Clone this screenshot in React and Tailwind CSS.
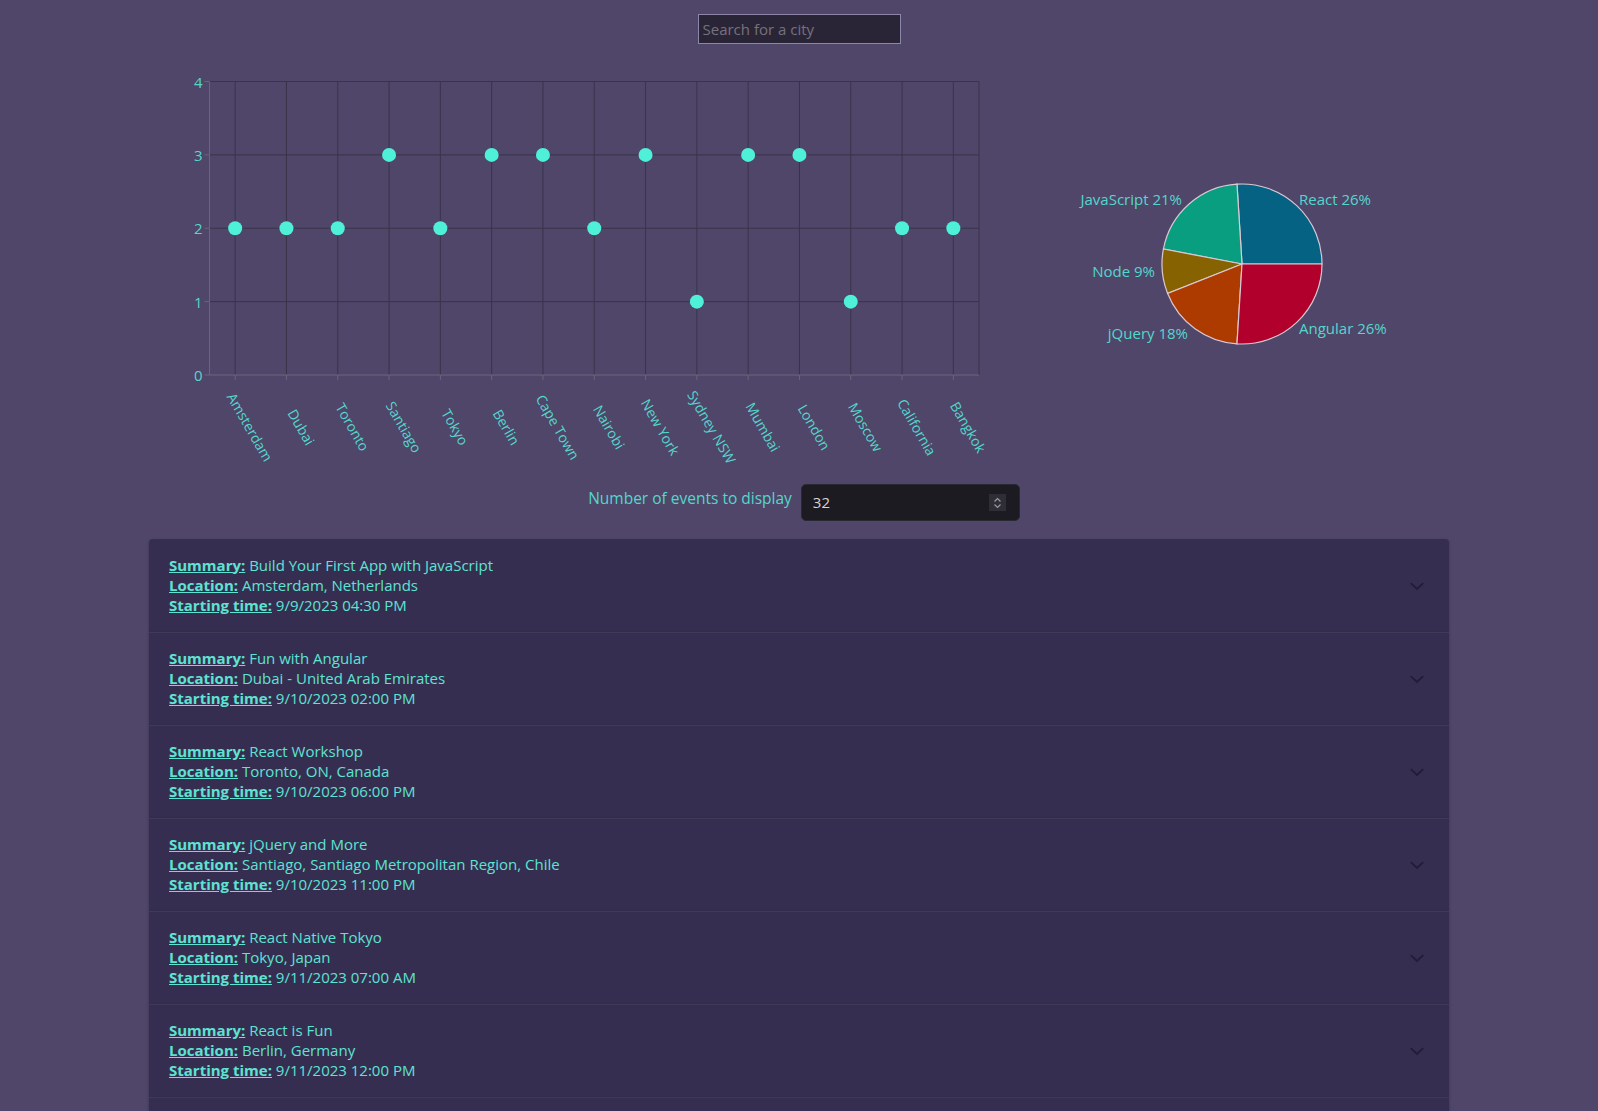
import React, { useState } from 'react';

const cities = ['Amsterdam', 'Dubai', 'Toronto', 'Santiago', 'Tokyo', 'Berlin', 'Cape Town', 'Nairobi', 'New York', 'Sydney NSW', 'Mumbai', 'London', 'Moscow', 'California', 'Bangkok'];
const counts = [2, 2, 2, 3, 2, 3, 3, 2, 3, 1, 3, 3, 1, 2, 2];

const genres = [
  { name: 'React', value: 26, color: '#066282' },
  { name: 'JavaScript', value: 21, color: '#0a9e80' },
  { name: 'Node', value: 9, color: '#876200' },
  { name: 'jQuery', value: 18, color: '#ad3b00' },
  { name: 'Angular', value: 26, color: '#b0002b' },
];

const events = [
  { summary: 'Build Your First App with JavaScript', location: 'Amsterdam, Netherlands', start: '9/9/2023 04:30 PM' },
  { summary: 'Fun with Angular', location: 'Dubai - United Arab Emirates', start: '9/10/2023 02:00 PM' },
  { summary: 'React Workshop', location: 'Toronto, ON, Canada', start: '9/10/2023 06:00 PM' },
  { summary: 'jQuery and More', location: 'Santiago, Santiago Metropolitan Region, Chile', start: '9/10/2023 11:00 PM' },
  { summary: 'React Native Tokyo', location: 'Tokyo, Japan', start: '9/11/2023 07:00 AM' },
  { summary: 'React is Fun', location: 'Berlin, Germany', start: '9/11/2023 12:00 PM' },
  { summary: 'Learn Node', location: 'Cape Town, South Africa', start: '9/11/2023 05:00 PM' },
];

// plot area inside the scatter svg
const X0 = 60.5, X1 = 830, YT = 21.5, YB = 315;
const band = (X1 - X0) / cities.length;
const yOf = (v) => YB - (v / 4) * (YB - YT);

function CityScatter() {
  return (
    <svg width="850" height="410" className="shrink-0" style={{ fontFamily: '"Open Sans", sans-serif' }}>
      {/* grid */}
      {[1, 2, 3, 4].map(v => (
        <line key={v} x1={X0} x2={X1} y1={yOf(v)} y2={yOf(v)} stroke="#3a3449" strokeWidth="1" />
      ))}
      {cities.map((c, i) => (
        <line key={c} x1={X0 + band * (i + 0.5)} x2={X0 + band * (i + 0.5)} y1={YT} y2={YB} stroke="#3a3449" strokeWidth="1" />
      ))}
      <line x1={X1} x2={X1} y1={YT} y2={YB} stroke="#3a3449" />
      {/* axes */}
      <line x1={X0} x2={X0} y1={YT} y2={YB} stroke="#6a6480" />
      <line x1={X0} x2={X1} y1={YB} y2={YB} stroke="#6a6480" />
      {[0, 1, 2, 3, 4].map(v => (
        <g key={v}>
          <line x1={X0 - 5} x2={X0} y1={yOf(v)} y2={yOf(v)} stroke="#6a6480" />
          <text x={X0 - 7} y={yOf(v)} textAnchor="end" dominantBaseline="central" fill="#55d6cc" fontSize="15">{v}</text>
        </g>
      ))}
      {cities.map((c, i) => {
        const x = X0 + band * (i + 0.5);
        return (
          <g key={c}>
            <line x1={x} x2={x} y1={YB} y2={YB + 5} stroke="#6a6480" />
            <text transform={`translate(${x + 15},367) rotate(60)`} textAnchor="middle" dominantBaseline="central" fill="#55d6cc" fontSize="14">{c}</text>
            <circle cx={x} cy={yOf(counts[i])} r="7" fill="#4ff0d8" />
          </g>
        );
      })}
    </svg>
  );
}

function GenrePie() {
  const cx = 243, cy = 204, r = 80;
  let angle = 0;
  const slices = genres.map(g => {
    const start = angle;
    const end = angle + (g.value / 100) * 360;
    angle = end;
    const p = (a) => [cx + r * Math.cos((a * Math.PI) / 180), cy - r * Math.sin((a * Math.PI) / 180)];
    const [sx, sy] = p(start);
    const [ex, ey] = p(end);
    const large = end - start > 180 ? 1 : 0;
    return { ...g, d: `M${cx},${cy} L${sx},${sy} A${r},${r} 0 ${large} 0 ${ex},${ey} Z` };
  });
  const labels = [
    { t: 'React 26%', x: 300, y: 139, a: 'start' },
    { t: 'JavaScript 21%', x: 183, y: 139, a: 'end' },
    { t: 'Node 9%', x: 156, y: 211, a: 'end' },
    { t: 'jQuery 18%', x: 189, y: 273, a: 'end' },
    { t: 'Angular 26%', x: 300, y: 268, a: 'start' },
  ];
  return (
    <svg width="450" height="410" className="shrink-0" style={{ fontFamily: '"Open Sans", sans-serif' }}>
      {slices.map(s => (
        <path key={s.name} d={s.d} fill={s.color} stroke="#d9c9d4" strokeWidth="1.2" />
      ))}
      {labels.map(l => (
        <text key={l.t} x={l.x} y={l.y} textAnchor={l.a} dominantBaseline="central" fill="#55d6cc" fontSize="15">{l.t}</text>
      ))}
    </svg>
  );
}

function EventCard({ event }) {
  return (
    <div className="flex items-center justify-between bg-[#352e51] border-t border-[#403a58] first:border-t-0 first:rounded-t shadow-[0_1px_3px_rgba(0,0,0,0.25)] h-[93px] px-5">
      <div className="text-[15px] leading-[20px] text-[#5ee3d2] -mt-[2px]">
        <p><span className="font-bold underline">Summary:</span> {event.summary}</p>
        <p><span className="font-bold underline">Location:</span> {event.location}</p>
        <p><span className="font-bold underline">Starting time:</span> {event.start}</p>
      </div>
      <svg width="20" height="20" viewBox="0 0 24 24" className="mr-[2px]">
        <polyline points="4.5,8.5 12,15.5 19.5,8.5" fill="none" stroke="#221c37" strokeWidth="2.2" />
      </svg>
    </div>
  );
}

export default function App() {
  const [query, setQuery] = useState('');
  const [count, setCount] = useState(32);

  return (
    <div className="min-h-screen bg-[#4f4669] pt-[14px] pb-10" style={{ fontFamily: '"Open Sans", sans-serif' }}>
      <div className="flex justify-center">
        <input
          value={query}
          onChange={e => setQuery(e.target.value)}
          placeholder="Search for a city"
          className="w-[203px] h-[30px] bg-[#2a2536] border border-[#8d86a6] px-1 text-[15px] text-[#ccc] placeholder:text-[#76717f] outline-none"
        />
      </div>

      {/* Charts */}
      <div className="w-[1300px] mx-auto mt-[16px] flex">
        <CityScatter />
        <GenrePie />
      </div>

      {/* Number of events */}
      <div className="flex justify-center items-center gap-[9px] mt-[14px] pl-[10px]">
        <label className="text-[15.5px] text-[#55d6cc] mb-[8px]">Number of events to display</label>
        <div className="w-[219px] h-[37px] rounded-[5px] bg-[#1c1b21] border border-[#2a2833] flex items-center justify-between pl-[11px] pr-[13px]">
          <span className="text-[15px] text-[#d6d6d6]">{count}</span>
          <div className="w-[17px] h-[17px] bg-[#2f2d36] flex items-center justify-center">
            <svg width="9" height="12" viewBox="0 0 9 12">
              <polyline points="1.5,4.5 4.5,1.5 7.5,4.5" fill="none" stroke="#9a98a3" strokeWidth="1.2" />
              <polyline points="1.5,7.5 4.5,10.5 7.5,7.5" fill="none" stroke="#9a98a3" strokeWidth="1.2" />
            </svg>
          </div>
        </div>
      </div>

      {/* Event list */}
      <div className="w-[1300px] mx-auto mt-[18px] flex flex-col">
        {events.map((ev, i) => (
          <EventCard key={i} event={ev} />
        ))}
      </div>
    </div>
  );
}
